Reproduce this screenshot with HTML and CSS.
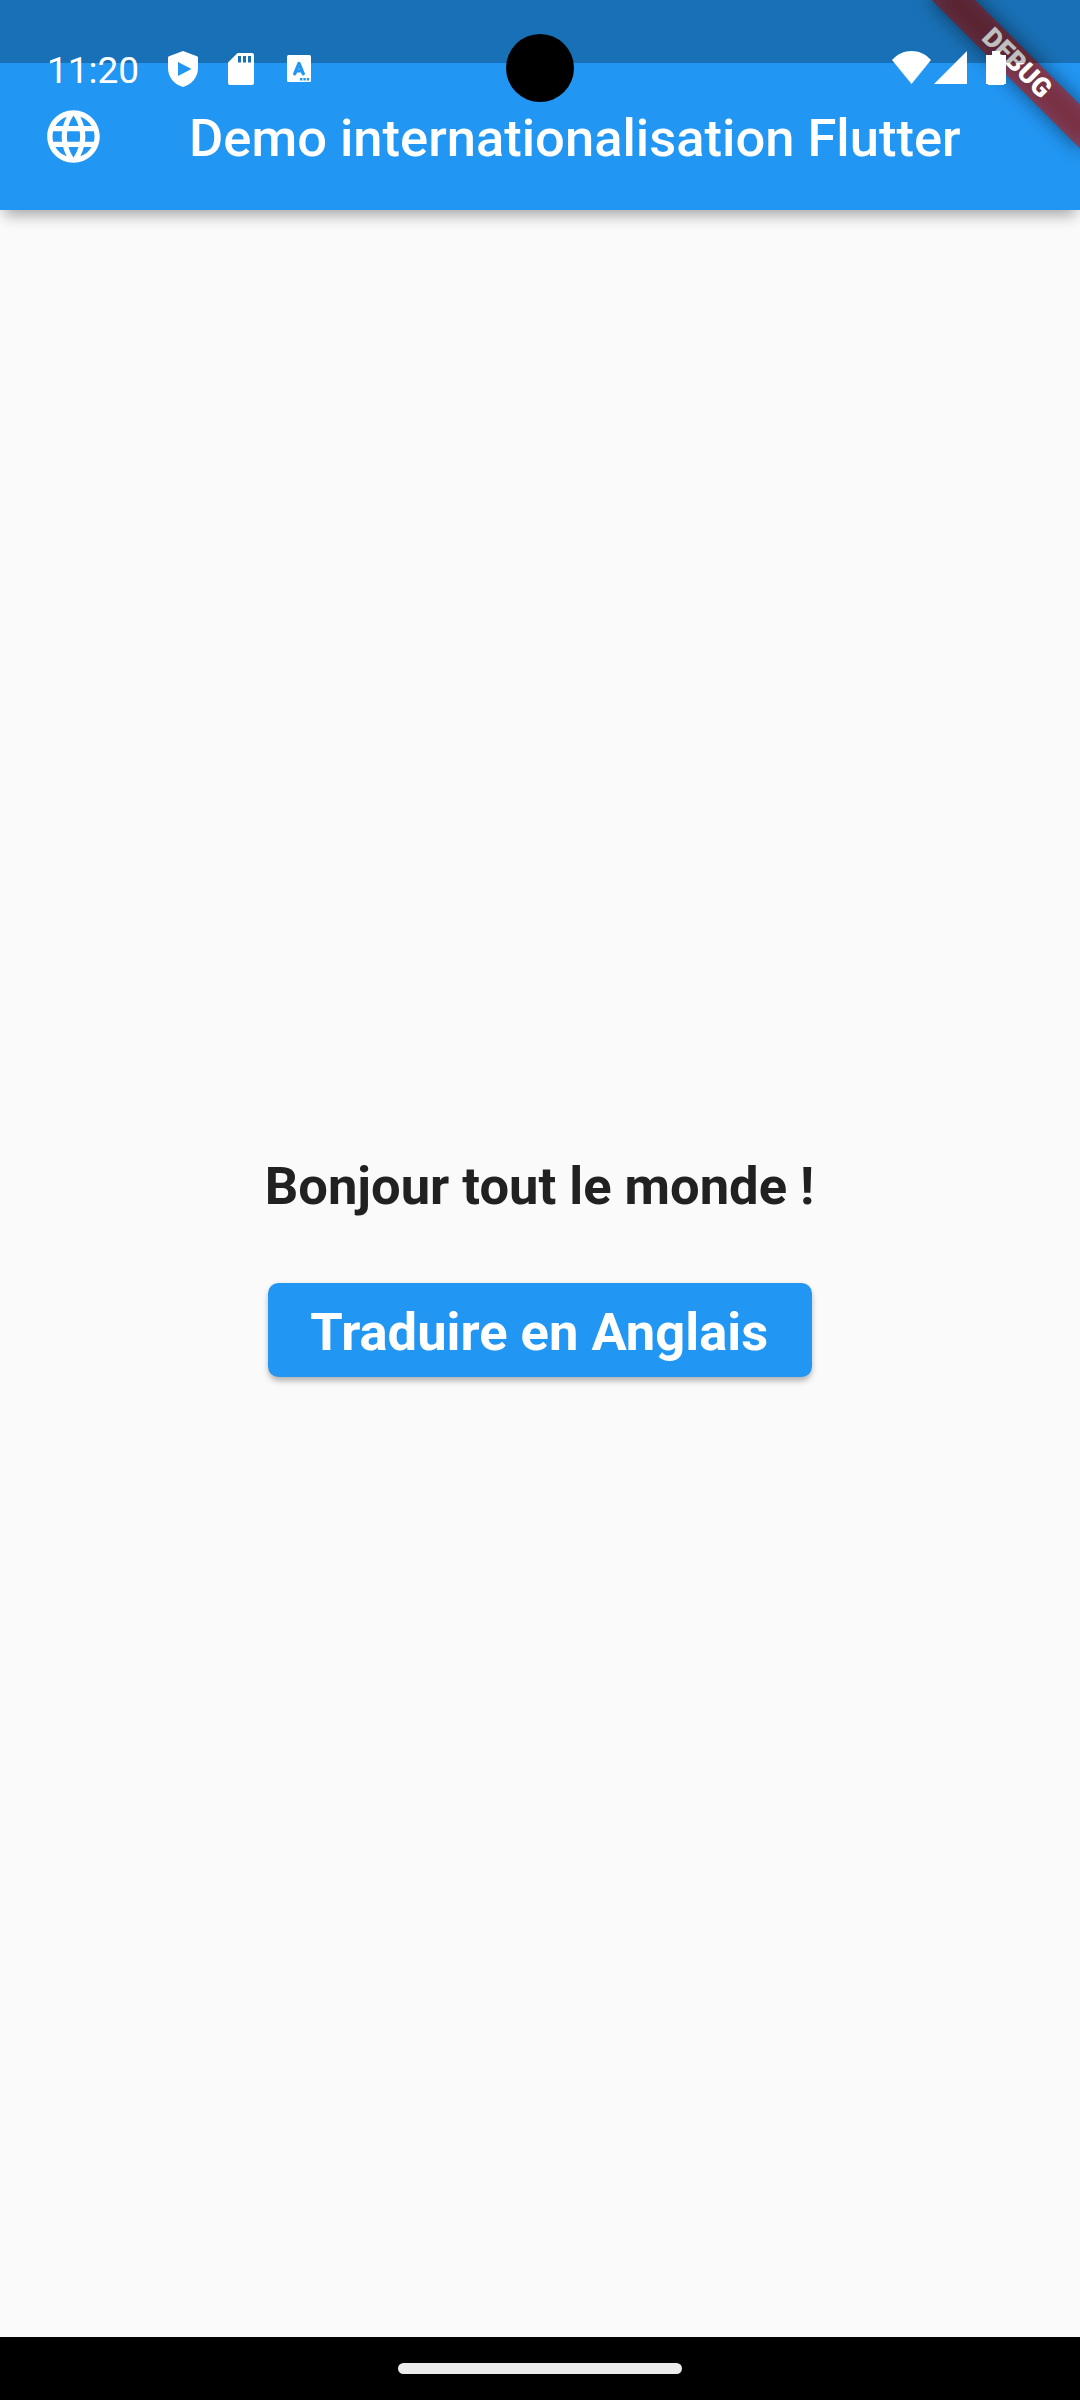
FILE: index.html
```html
<!DOCTYPE html>
<html lang="fr">
<head>
<meta charset="utf-8">
<title>Demo internationalisation Flutter</title>
<link rel="stylesheet" href="styles.css">
</head>
<body>
<div class="screen">
  <header class="app-bar">
    <svg class="globe" viewBox="0 0 24 24"><path d="M11.99 2C6.47 2 2 6.48 2 12s4.47 10 9.99 10C17.52 22 22 17.52 22 12S17.52 2 11.99 2zm6.93 6h-2.95c-.32-1.25-.78-2.45-1.38-3.56 1.84.63 3.37 1.91 4.33 3.56zM12 4.04c.83 1.2 1.48 2.53 1.91 3.96h-3.82c.43-1.43 1.08-2.76 1.91-3.96zM4.26 14C4.1 13.36 4 12.69 4 12s.1-1.36.26-2h3.38c-.08.66-.14 1.32-.14 2s.06 1.34.14 2H4.26zm.82 2h2.95c.32 1.25.78 2.45 1.38 3.56-1.84-.63-3.37-1.9-4.33-3.56zm2.95-8H5.08c.96-1.66 2.49-2.93 4.33-3.56C8.81 5.55 8.35 6.75 8.03 8zM12 19.96c-.83-1.2-1.48-2.53-1.91-3.96h3.82c-.43 1.43-1.08 2.76-1.91 3.96zM14.34 14H9.66c-.09-.66-.16-1.32-.16-2s.07-1.35.16-2h4.68c.09.65.16 1.32.16 2s-.07 1.34-.16 2zm.25 5.56c.6-1.11 1.06-2.31 1.38-3.56h2.95c-.96 1.65-2.49 2.93-4.33 3.56zM16.36 14c.08-.66.14-1.32.14-2s-.06-1.34-.14-2h3.38c.16.64.26 1.31.26 2s-.1 1.36-.26 2h-3.38z"/></svg>
    <h1 class="title">Demo internationalisation Flutter</h1>
  </header>
  <main class="content">
    <p class="greeting">Bonjour tout le monde !</p>
    <button class="translate" type="button">Traduire en Anglais</button>
  </main>
  <footer class="nav-bar"><div class="handle"></div></footer>

  <div class="banner-corner">
    <div class="banner-shadow"></div>
    <div class="banner">DEBUG</div>
  </div>
  <div class="scrim"></div>
  <div class="status-bar">
    <span class="clock">11:20</span>
    <svg class="icon shield" width="30" height="36" viewBox="0 0 30 36"><path fill-rule="evenodd" d="M15 0 29 5.2Q30 5.6 30 6.600V17C30 26 24 33.500 15 36C6 33.500 0 26 0 17V6.600Q0 5.600 1 5.200ZM10 11V25L23.500 18Z"/></svg>
    <svg class="icon sd" width="26" height="32" viewBox="0 0 26 32"><path fill-rule="evenodd" d="M9.500 0H24Q26 0 26 2V30Q26 32 24 32H2Q0 32 0 30V9.500ZM10 3V9.500H13V3ZM15 3V9.500H18V3ZM20 3V9.500H23V3Z"/></svg>
    <svg class="icon lang" width="24" height="27" viewBox="0 0 24 27"><rect width="24" height="27" rx="1.500"/><path class="cut" d="M7.700 18.800 12 8.500 16.300 18.800M9 15.800H15"/><path class="dots" d="M13 23h2.400v2.400H13zM16.400 23h2.400v2.400h-2.400zM19.800 23h2.400v2.400h-2.400z"/></svg>
    <span class="spacer"></span>
    <svg class="icon wifi" width="39" height="33" viewBox="0 0 39 33"><path d="M19.500 33 0 9C5.500 3 12 0 19.500 0S33.500 3 39 9Z"/></svg>
    <svg class="icon signal" width="33" height="33" viewBox="0 0 33 33"><path d="M33 0V33H0Z"/></svg>
    <svg class="icon battery" width="20" height="34" viewBox="0 0 20 34"><path d="M6 0H14V4H20V33H18V34H2V33H0V4H6Z"/></svg>
  </div>
  <div class="camera"></div>
</div>
</body>
</html>
```
FILE: styles.css
```css
* { box-sizing: border-box; }

body {
  margin: 0;
  font-family: Roboto, sans-serif;
}

.screen {
  position: relative;
  display: flex;
  flex-direction: column;
  width: 1080px;
  height: 2400px;
  overflow: hidden;
  background: #fafafa;
}

.app-bar {
  display: flex;
  align-items: center;
  gap: 84px;
  height: 210px;
  padding: 63px 42px 0;
  background: #2196f3;
  color: #fff;
  box-shadow: 0 10px 14px -5px rgba(0, 0, 0, 0.3), 0 2px 18px rgba(0, 0, 0, 0.07);
}

.globe {
  flex: none;
  width: 63px;
  height: 63px;
  fill: currentColor;
}

.title {
  margin: 0;
  padding-top: 3px;
  font-size: 52.5px;
  font-weight: 500;
  line-height: 62px;
  white-space: nowrap;
}

.content {
  flex: 1;
  display: flex;
  flex-direction: column;
  align-items: center;
  justify-content: center;
  gap: 66px;
}

.greeting {
  margin: 0 1px 0 0;
  color: #212121;
  font-size: 52.5px;
  font-weight: 700;
  line-height: 61px;
}

.translate {
  height: 94.5px;
  margin-bottom: 14.25px;
  padding: 6px 43.5px 0 42px;
  border: 0;
  border-radius: 10.5px;
  background: #2196f3;
  color: #fff;
  font: 700 52.5px/61px Roboto, sans-serif;
  box-shadow: 0 5px 6px -1px rgba(0, 0, 0, 0.26), 0 1px 6px rgba(0, 0, 0, 0.08);
}

.nav-bar {
  display: flex;
  align-items: center;
  justify-content: center;
  height: 63px;
  background: #000;
}

.handle {
  width: 284px;
  height: 11px;
  border-radius: 6px;
  background: #ebebeb;
}

.banner-corner {
  position: absolute;
  top: 0;
  left: 1080px;
  width: 0;
  height: 0;
  transform: rotate(45deg);
  transform-origin: 0 0;
}

.banner,
.banner-shadow {
  position: absolute;
  top: 73.5px;
  left: -105px;
  width: 210px;
  height: 31.5px;
}

.banner-shadow {
  background: rgba(0, 0, 0, 0.5);
  filter: blur(10px);
}

.banner {
  background: rgba(183, 28, 28, 0.627);
  color: #fff;
  font-size: 26.8px;
  font-weight: 900;
  line-height: 31.5px;
  text-align: center;
}

.scrim {
  position: absolute;
  top: 0;
  left: 0;
  width: 100%;
  height: 63px;
  background: rgba(0, 0, 0, 0.25);
}

.status-bar {
  position: absolute;
  top: 51px;
  left: 0;
  display: flex;
  align-items: flex-start;
  width: 100%;
  height: 40px;
  padding: 0 74px 0 47px;
  color: #fff;
}

.clock {
  width: 121px;
  font-size: 37px;
  line-height: 39px;
}

.icon { flex: none; fill: currentColor; }
.sd { margin: 2px 0 0 30px; }
.lang { margin: 4px 0 0 33px; }
.signal { margin-left: 3px; }
.battery { margin-left: 19px; }
.spacer { flex: 1; }

.cut {
  fill: none;
  stroke: #2196f3;
  stroke-width: 3.3;
  stroke-linecap: round;
  stroke-linejoin: round;
}

.dots { fill: #2196f3; }

.camera {
  position: absolute;
  top: 34px;
  left: 506px;
  width: 68px;
  height: 68px;
  border-radius: 50%;
  background: #000;
}
```
